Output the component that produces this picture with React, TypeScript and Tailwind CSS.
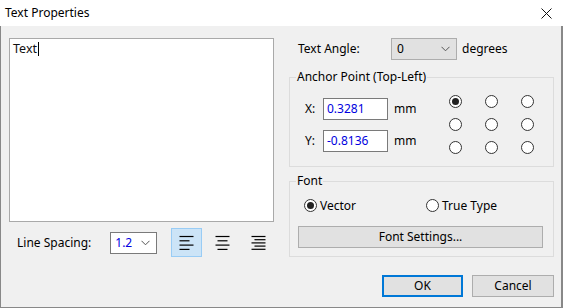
import React from "react";

const font = { fontFamily: '"Noto Sans", "Segoe UI", sans-serif' };

function Chevron() {
  return (
    <svg width="9" height="6" viewBox="0 0 9 6" className="shrink-0">
      <path d="M0.5 0.8 L4.5 4.8 L8.5 0.8" fill="none" stroke="#555" strokeWidth="1" />
    </svg>
  );
}

function Radio({ checked }: { checked?: boolean }) {
  return (
    <div className="w-[13px] h-[13px] rounded-full border border-[#333] bg-white flex items-center justify-center shrink-0">
      {checked && <div className="w-[7px] h-[7px] rounded-full bg-[#222]" />}
    </div>
  );
}

function AlignIcon({ kind }: { kind: "left" | "center" | "right" }) {
  const lines =
    kind === "right"
      ? [
          [0, 14],
          [3, 11],
          [0, 14],
          [3, 11],
          [0, 14],
        ]
      : kind === "center"
      ? [
          [0, 14],
          [2, 10],
          [0, 14],
          [2, 10],
        ]
      : [
          [0, 14],
          [0, 10],
          [0, 14],
          [0, 10],
        ];
  const step = kind === "right" ? 3.2 : 4.3;
  return (
    <svg width="15" height="15" viewBox="0 0 15 15">
      {lines.map(([x, w], i) => {
        const y = 1.5 + i * step;
        const x1 = kind === "right" ? 14.5 - w : kind === "center" ? 0.5 + (14 - w) / 2 : 0.5;
        return <line key={i} x1={x1} x2={x1 + w} y1={y} y2={y} stroke="#000" strokeWidth="1.2" />;
      })}
    </svg>
  );
}

export default function App() {
  return (
    <div className="w-[563px] h-[308px] flex flex-col text-[12px] text-black select-none" style={font}>
      <div className="h-[26px] bg-white flex items-center pl-[5px] pr-[11px] shrink-0">
        <span className="leading-none">Text Properties</span>
        <svg width="11" height="11" viewBox="0 0 11 11" className="ml-auto">
          <path d="M0.5 0.5 L10.5 10.5 M10.5 0.5 L0.5 10.5" stroke="#111" strokeWidth="1" />
        </svg>
      </div>
      <div className="flex-1 bg-[#f0f0f0] border-l border-r-2 border-b border-[#888] flex pl-[8px] pt-[12px]">
        {/* left column */}
        <div className="w-[265px] flex flex-col">
          <div className="h-[184px] border border-[#a9a9a9] bg-white pl-[3px] pt-[2px] flex items-start">
            <span className="text-[12.5px] leading-[15px] text-[#111]">Text</span>
            <div className="w-px h-[14px] bg-black mt-px ml-px" />
          </div>
          <div className="mt-[6px] h-[29px] flex items-center">
            <span className="ml-[8px] w-[94px]">Line Spacing:</span>
            <div className="w-[47px] h-[22px] border border-[#7a7a7a] bg-white flex items-center pl-[4px] pr-[6px]">
              <span className="text-[#0000e0]">1.2</span>
              <span className="ml-auto">
                <Chevron />
              </span>
            </div>
            <div className="ml-[14px] flex gap-[5px]">
              <div className="w-[31px] h-[29px] border border-[#99ccf5] bg-[#cce4f7] flex items-center justify-center">
                <AlignIcon kind="left" />
              </div>
              <div className="w-[31px] h-[29px] flex items-center justify-center">
                <AlignIcon kind="center" />
              </div>
              <div className="w-[31px] h-[29px] flex items-center justify-center">
                <AlignIcon kind="right" />
              </div>
            </div>
          </div>
        </div>
        {/* right column */}
        <div className="w-[265px] ml-[15px] flex flex-col">
          <div className="h-[22px] flex items-center">
            <span className="ml-[9px] w-[93px]">Text Angle:</span>
            <div className="w-[66px] h-[22px] border border-[#adadad] bg-[#e1e1e1] flex items-center pl-[5px] pr-[6px]">
              <span>0</span>
              <span className="ml-auto">
                <Chevron />
              </span>
            </div>
            <span className="ml-[5px]">degrees</span>
          </div>
          <div className="relative mt-[17px] h-[90px] border border-[#dcdcdc] flex justify-between">
            <span className="absolute -top-[9px] left-[6px] px-[1px] bg-[#f0f0f0] leading-[16px]">
              Anchor Point (Top-Left)
            </span>
            <div className="pl-[15px] pt-[20px] flex flex-col gap-[10px]">
              <div className="flex items-center">
                <span className="w-[18px]">X:</span>
                <div className="w-[65px] h-[22px] border border-[#7a7a7a] bg-white flex items-center pl-[3px] text-[#0000e0]">
                  0.3281
                </div>
                <span className="ml-[6px]">mm</span>
              </div>
              <div className="flex items-center">
                <span className="w-[18px]">Y:</span>
                <div className="w-[65px] h-[22px] border border-[#7a7a7a] bg-white flex items-center pl-[3px] text-[#0000e0]">
                  -0.8136
                </div>
                <span className="ml-[6px]">mm</span>
              </div>
            </div>
            <div className="pt-[17px] pr-[19px] grid grid-cols-[13px_13px_13px] gap-x-[23px] gap-y-[10px] content-start">
              <Radio checked />
              <Radio />
              <Radio />
              <Radio />
              <Radio />
              <Radio />
              <Radio />
              <Radio />
              <Radio />
            </div>
          </div>
          <div className="relative mt-[14px] h-[76px] border border-[#dcdcdc] flex flex-col">
            <span className="absolute -top-[9px] left-[6px] px-[1px] bg-[#f0f0f0] leading-[16px]">Font</span>
            <div className="pt-[17px] pl-[14px] flex items-center h-[30px]">
              <div className="w-[122px] flex items-center gap-[3px]">
                <Radio checked />
                <span>Vector</span>
              </div>
              <div className="flex items-center gap-[3px]">
                <Radio />
                <span>True Type</span>
              </div>
            </div>
            <div className="mt-[14px] ml-[8px] w-[245px] h-[22px] border border-[#adadad] bg-[#e1e1e1] flex items-center justify-center">
              Font Settings...
            </div>
          </div>
          <div className="mt-[18px] flex justify-end gap-[9px]">
            <div className="w-[81px] h-[22px] border-2 border-[#0078d7] bg-[#e1e1e1] flex items-center justify-center">
              OK
            </div>
            <div className="w-[82px] h-[22px] border border-[#adadad] bg-[#e1e1e1] flex items-center justify-center">
              Cancel
            </div>
          </div>
        </div>
      </div>
    </div>
  );
}
